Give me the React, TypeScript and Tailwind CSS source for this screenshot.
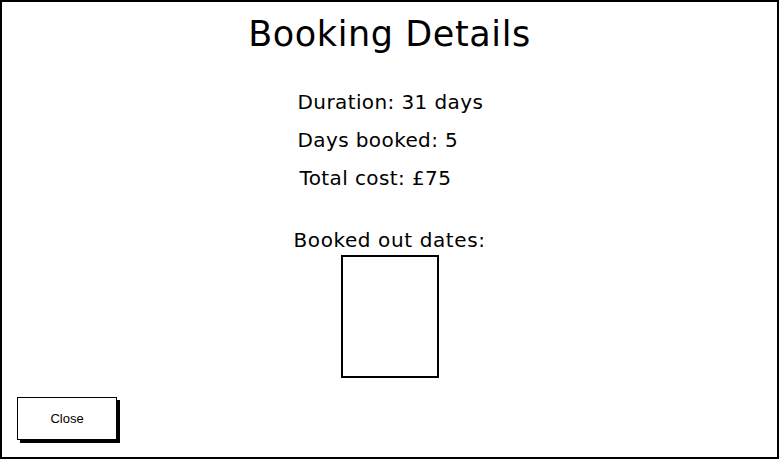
export default function App() {
  return (
    <div className="w-[780px] h-[460px] bg-white">
      <div className="w-[779px] h-[459px] border-2 border-black flex flex-col items-center relative" style={{ fontFamily: "'DejaVu Sans', sans-serif" }}>
        <h1 className="mt-[8px] text-[35px] leading-[48px] tracking-[0.6px] text-black">Booking Details</h1>
        <div className="mt-[25px] flex flex-col w-[190px] pl-[3px] text-[20px] leading-[38px] tracking-[0.4px] text-black">
          <div>Duration: 31 days</div>
          <div>Days booked: 5</div>
          <div className="pl-[2px]">Total cost: £75</div>
        </div>
        <div className="mt-[30px] text-[20px] leading-[26px] tracking-[0.6px] text-black">Booked out dates:</div>
        <div className="mt-[2px] w-[98px] h-[123px] border-2 border-black bg-white" />
        <div className="flex-1" />
        <div className="self-start ml-[15px] mb-[17px] w-[100px] h-[43px] border-[1.5px] border-black bg-white shadow-[3px_3px_0_0_#000] flex items-center justify-center text-[13px] text-black" style={{ fontFamily: "'Liberation Sans', Arial, sans-serif" }}>
          Close
        </div>
      </div>
    </div>
  );
}
